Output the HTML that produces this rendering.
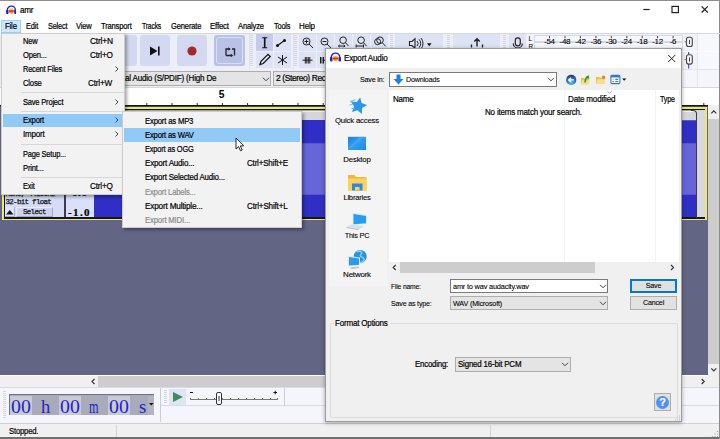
<!DOCTYPE html>
<html>
<head>
<meta charset="utf-8">
<title>amr</title>
<style>
*{box-sizing:border-box;margin:0;padding:0}
html,body{width:720px;height:439px;overflow:hidden;background:#fff}
body{font-family:"Liberation Sans",sans-serif;font-size:9px;color:#000;position:relative}
.a{position:absolute}
.t{position:absolute;white-space:nowrap;line-height:12px;height:12px}
.g{color:#8c8c8c}
#title{left:0;top:0;width:720px;height:20px;background:#fff}
#menubar{left:0;top:20px;width:720px;height:13px;background:#fff}
#tb{left:0;top:33px;width:720px;height:75px;background:#f0f0f0}
#trackarea{left:0;top:108px;width:720px;height:267px;background:#636585}
.menu{background:#f2f2f2;border:1px solid #ccc;box-shadow:2px 2px 3px rgba(0,0,0,.35)}
.hl{background:#91c9f7}
.sep{position:absolute;height:1px;background:#d7d7d7}
.btn{position:absolute;background:#e1e1e1;border:1px solid #adadad;text-align:center}
.combo{position:absolute;background:#e4e4e4;border:1px solid #adadad}

.t{letter-spacing:-0.4px;font-size:8.5px;-webkit-text-stroke:0.2px currentColor}
.mb{line-height:13px;height:13px}
.tbn{background:#d3d9f0;border-radius:3px}
.tbn2{background:#dde2f4}
.grip{width:3px;background:repeating-linear-gradient(180deg,#d0d4e3 0,#d0d4e3 1px,transparent 1px,transparent 2px)}
.sc{top:37.700px;width:20px;text-align:center;-webkit-text-stroke:0.1px currentColor;font-size:8px;line-height:8px;height:8px;letter-spacing:-0.3px}
.mono{font-family:"Liberation Mono",monospace;font-size:7.5px;letter-spacing:-0.7px;color:#111;-webkit-text-stroke:0.25px #111}
.td{top:396.500px;font-family:"Liberation Serif",serif;font-size:18.500px;line-height:21px;height:21px;color:#2222cc;letter-spacing:0.500px;-webkit-text-stroke:0}

.mi{line-height:14px;height:14px;letter-spacing:-0.5px}
.d{font-size:8px;letter-spacing:-0.45px;-webkit-text-stroke:0.1px currentColor}
.d2{font-size:8.5px;letter-spacing:-0.4px}
.c{text-align:center}
</style>
</head>
<body>
<!-- main window -->
<div class="a" id="title"></div>
<div class="a" id="menubar"></div>
<div class="a" id="tb"></div>
<div class="a" id="trackarea"></div>
<!-- title -->
<svg class="a" style="left:5.500px;top:4.500px" width="10.700" height="9.500" viewBox="0 0 11 10">
<path d="M1.300 6.500V5.300A4.200 4.200 0 0 1 9.700 5.300V6.500" fill="none" stroke="#1a1ae6" stroke-width="1.400"/>
<rect x="0" y="5" width="2.500" height="4.600" rx="1.100" fill="#1a1ae6"/><rect x="8.500" y="5" width="2.500" height="4.600" rx="1.100" fill="#1a1ae6"/>
<circle cx="5.500" cy="6.200" r="2.700" fill="#f6c81e"/><path d="M2.900 6.900a2.700 2.700 0 0 0 5.200 0z" fill="#f08a1e"/><path d="M2.800 5.600h5.400v1.500h-5.400z" fill="#e8281a"/>
</svg>
<div class="t" style="left:20.00px;top:4px;letter-spacing:-0.20px;transform:scaleX(0.9476);transform-origin:0 0">amr</div>
<svg class="a" style="left:560px;top:0" width="160" height="20" viewBox="0 0 160 20">
<path d="M83.300 9.500h6.400" stroke="#222" stroke-width="1.200" fill="none"/>
<rect x="112" y="6.400" width="6.400" height="6.200" stroke="#222" stroke-width="1.200" fill="none"/>
<path d="M141.600 6.300l6.200 6.200M147.800 6.300l-6.200 6.200" stroke="#222" stroke-width="1.200" fill="none"/>
</svg>
<!-- menubar -->
<div class="a" style="left:1px;top:20px;width:20px;height:13px;background:#cce8ff;border:1px solid #99d1ff"></div>
<div class="t mb" style="left:5.00px;top:20px;letter-spacing:-0.20px;transform:scaleX(0.9156);transform-origin:0 0">File</div>
<div class="t mb" style="left:25.75px;top:20px;letter-spacing:-0.20px;transform:scaleX(0.8713);transform-origin:0 0">Edit</div>
<div class="t mb" style="left:47.50px;top:20px;letter-spacing:-0.20px;transform:scaleX(0.8614);transform-origin:0 0">Select</div>
<div class="t mb" style="left:76.25px;top:20px;letter-spacing:-0.20px;transform:scaleX(0.8906);transform-origin:0 0">View</div>
<div class="t mb" style="left:101.25px;top:20px;letter-spacing:-0.20px;transform:scaleX(0.8922);transform-origin:0 0">Transport</div>
<div class="t mb" style="left:142.00px;top:20px;letter-spacing:-0.20px;transform:scaleX(0.7955);transform-origin:0 0">Tracks</div>
<div class="t mb" style="left:171.00px;top:20px;letter-spacing:-0.20px;transform:scaleX(0.8959);transform-origin:0 0">Generate</div>
<div class="t mb" style="left:210.00px;top:20px;letter-spacing:-0.20px;transform:scaleX(0.9228);transform-origin:0 0">Effect</div>
<div class="t mb" style="left:238.00px;top:20px;letter-spacing:-0.20px;transform:scaleX(0.8952);transform-origin:0 0">Analyze</div>
<div class="t mb" style="left:273.50px;top:20px;letter-spacing:-0.20px;transform:scaleX(0.8664);transform-origin:0 0">Tools</div>
<div class="t mb" style="left:299.00px;top:20px;letter-spacing:-0.20px;transform:scaleX(0.9474);transform-origin:0 0">Help</div>
<!-- toolbars row -->
<div class="a" style="left:0;top:33px;width:698px;height:36px;background:#eceef8"></div>
<div class="a" style="left:697px;top:33px;width:23px;height:55px;background:#f7f8fd"></div>
<!-- transport buttons -->
<div class="a tbn" style="left:104px;top:35px;width:33px;height:31px"></div>
<div class="a tbn" style="left:140px;top:35px;width:30px;height:31px"></div>
<div class="a tbn" style="left:177px;top:35px;width:30px;height:31px"></div>
<div class="a" style="left:214px;top:35px;width:31px;height:31px;background:#b9c1e6;border-radius:3px"></div>
<div class="a" style="left:216px;top:37px;width:27px;height:27px;border:1px solid #d9def2;border-radius:3px"></div>
<svg class="a" style="left:140px;top:35px" width="110" height="31" viewBox="0 0 110 31">
<path d="M10 11.5l7.5 4.5l-7.5 4.5z" fill="#111"/><rect x="18" y="11.5" width="1.6" height="9" fill="#111"/>
<circle cx="52" cy="16" r="4.6" fill="#a32a2a"/>
<path d="M86 20.500v-6.500h3.500M94.500 20.500v-6.500h-2.500M86 20.500h5.500" fill="none" stroke="#22222c" stroke-width="1.300"/>
<path d="M88.300 12.300l2.400 1.700l-2.400 1.700zM90.800 18.800l2.400 1.700l-2.400 1.700z" fill="#22222c"/>
</svg>
<!-- grippers -->
<div class="a grip" style="left:250px;top:35px;height:32px"></div>
<div class="a grip" style="left:294px;top:35px;height:32px"></div>
<div class="a grip" style="left:390px;top:35px;height:15px"></div>
<div class="a grip" style="left:447px;top:35px;height:15px"></div>
<div class="a grip" style="left:503px;top:35px;height:15px"></div>
<div class="a" style="left:248.500px;top:34px;width:1px;height:35px;background:#dfe2ee"></div><div class="a" style="left:292.500px;top:34px;width:1px;height:35px;background:#dfe2ee"></div>
<!-- tools -->
<div class="a" style="left:256px;top:34px;width:17px;height:17px;background:#c3caeb"></div>
<div class="a tbn2" style="left:274px;top:34px;width:17px;height:17px"></div>
<div class="a tbn2" style="left:256px;top:52px;width:17px;height:16px"></div>
<div class="a tbn2" style="left:274px;top:52px;width:17px;height:16px"></div>
<svg class="a" style="left:256px;top:34px" width="36" height="34" viewBox="0 0 36 34">
<path d="M6.200 3.800h5M6.200 13.800h5" stroke="#111" stroke-width="1.100" fill="none"/><path d="M8.700 3.800v10" stroke="#111" stroke-width="1.600" fill="none"/>
<path d="M21 12l8-6" stroke="#111" stroke-width="1.100" fill="none"/><circle cx="21.500" cy="11.500" r="1.500" fill="#111"/><circle cx="28.500" cy="6.500" r="1.500" fill="#111"/>
<path d="M4 30.500l1-3.200l7-7l2.200 2.200l-7 7z" stroke="#111" stroke-width="1.200" fill="none"/>
<path d="M26.500 21v10M22 23l9 6M31 23l-9 6" stroke="#111" stroke-width="1" fill="none"/>
</svg>
<!-- zoom buttons -->
<div class="a tbn2" style="left:299px;top:34px;width:17px;height:17px"></div>
<div class="a tbn2" style="left:317px;top:34px;width:17px;height:17px"></div>
<div class="a tbn2" style="left:335px;top:34px;width:17px;height:17px"></div>
<div class="a tbn2" style="left:353px;top:34px;width:17px;height:17px"></div>
<div class="a tbn2" style="left:371px;top:34px;width:17px;height:17px"></div>
<div class="a tbn2" style="left:299px;top:52px;width:17px;height:16px"></div>
<div class="a tbn2" style="left:317px;top:52px;width:17px;height:16px"></div>
<svg class="a" style="left:299px;top:34px" width="90" height="34" viewBox="0 0 90 34">
<g fill="none" stroke="#222" stroke-width="1">
<circle cx="7.500" cy="7.500" r="3.500"/><path d="M10 10l4 4M5.500 7.500h4M7.500 5.500v4"/>
<circle cx="25.500" cy="7.500" r="3.500"/><path d="M28 10l4 4M23.500 7.500h4"/>
<circle cx="44.100" cy="6.200" r="3.300"/><path d="M46.500 8.600l3 3.400M39.500 12h6.500M40.800 10.800l-1.300 1.200l1.300 1.200M44.700 10.800l1.300 1.200l-1.300 1.200"/>
<circle cx="62.100" cy="6.200" r="3.300"/><path d="M64.500 8.600l3 3.400M57.200 12h7.300M57.200 10.500v3M64.500 10.500v3"/>
<circle cx="78.600" cy="7.700" r="3"/><circle cx="81" cy="6.200" r="3.300"/><path d="M83.300 8.600l3.200 3.600"/>
<path d="M3.500 26.200h10M6.300 23v6.500M7.800 23v6.500M9.300 23v6.500M10.800 23v6.500"/>
<path d="M21.500 23v6.500M23 23v6.500M24.500 23v6.500M25 26.200h6"/>
</g></svg>
<!-- audio setup / share -->
<div class="a tbn2" style="left:395px;top:34px;width:48px;height:17px"></div>
<div class="a tbn2" style="left:453px;top:34px;width:47px;height:17px"></div>
<div class="a" style="left:509px;top:34px;width:188px;height:17px;background:#f1f3fb"></div>
<div class="a" style="left:509px;top:51px;width:188px;height:18px;background:#f1f3fb"></div>
<div class="a tbn2" style="left:509px;top:34px;width:17px;height:17px"></div>
<div class="a" style="left:534px;top:35px;width:149px;height:7px;background:#f6f7fd;border:1px solid #d4d7e6"></div>
<div class="a" style="left:534px;top:42px;width:149px;height:8px;background:#f6f7fd;border:1px solid #d4d7e6"></div>
<svg class="a" style="left:395px;top:34px" width="140" height="18" viewBox="0 0 140 18">
<g fill="none" stroke="#222" stroke-width="1.100">
<path d="M14.500 7.500h2.500l3-2.700v9.400l-3-2.700h-2.500z"/><path d="M22 7a3.500 3.500 0 0 1 0 5M24 5.300a6 6 0 0 1 0 8.400M26 4a8.500 8.500 0 0 1 0 11" stroke-width="1"/>
<path d="M82 12.500v-7.500M79.300 7.500l2.700-2.800l2.700 2.800M76.500 10.500v3M87.500 10.500v3" stroke-width="1.400"/>
<rect x="120.300" y="3.800" width="5" height="8" rx="2.500" stroke-width="1.200"/><path d="M118.300 9.500a4.500 4.500 0 0 0 9 0M122.800 14v2M120.300 16h5" stroke-width="1.200"/>
</g>
<path d="M32 9.300h4.600l-2.300 2.900z" fill="#111"/>
</svg>
<div class="t" style="left:528.500px;top:34.500px;font-size:6.500px;line-height:7px;height:7px;-webkit-text-stroke:0">L</div>
<div class="t" style="left:528.500px;top:43px;font-size:6.500px;line-height:7px;height:7px;-webkit-text-stroke:0">R</div>
<div class="t sc" style="left:539.4px">-54</div><div class="t sc" style="left:554.9px">-48</div><div class="t sc" style="left:570.3px">-42</div><div class="t sc" style="left:585.8px">-36</div><div class="t sc" style="left:601.2px">-30</div><div class="t sc" style="left:616.6px">-24</div><div class="t sc" style="left:632.1px">-18</div><div class="t sc" style="left:647.5px">-12</div><div class="t sc" style="left:663.0px">-6</div>
<svg class="a" style="left:541px;top:35.500px" width="140" height="4" viewBox="0 0 140 4"><path d="M8.5 0v2.300M24.0 0v2.300M39.4 0v2.300M54.9 0v2.300M70.3 0v2.300M85.8 0v2.300M101.2 0v2.300M116.6 0v2.300M132.1 0v2.300" stroke="#444" stroke-width="1"/></svg>
<svg class="a" style="left:682px;top:34px" width="16" height="36" viewBox="0 0 16 36">
<path d="M6.700 17v17.500" stroke="#2a2ae0" stroke-width="1"/>
<rect x="4.500" y="3.200" width="5.800" height="9.300" rx="2" fill="#f4f4f8" stroke="#444" stroke-width="1.100"/><path d="M7.500 5.800v4.200" stroke="#444"/>
<rect x="4.500" y="20.800" width="5.800" height="9.300" rx="2" fill="#f4f4f8" stroke="#444" stroke-width="1.100"/><path d="M7.500 23.400v4.200" stroke="#444"/>
<path d="M2.500 7.800h2M2.500 25.500h2" stroke="#b07040"/>
</svg>
<!-- device toolbar -->
<div class="a" style="left:0;top:69px;width:720px;height:19px;background:#f5f6fc"></div><div class="a" style="left:0;top:69px;width:600px;height:19px;background:#eceef8"></div><div class="a" style="left:600px;top:68.500px;width:120px;height:1px;background:#e2e4ee"></div><div class="a" style="left:697px;top:33px;width:1px;height:55px;background:#e2e4ee"></div><div class="a" style="left:509px;top:50.500px;width:211px;height:1px;background:#fbfbfe"></div>
<div class="combo" style="left:60px;top:71px;width:211px;height:15px"></div>
<div class="t" style="left:125.00px;top:72px;letter-spacing:-0.20px;transform:scaleX(0.9475);transform-origin:0 0">al Audio (S/PDIF) (High De</div>
<svg class="a" style="left:262.300px;top:76.500px" width="8" height="5" viewBox="0 0 8 5"><path d="M1 .800l3 3l3-3" fill="none" stroke="#444" stroke-width="1"/></svg>
<div class="combo" style="left:273px;top:71px;width:120px;height:15px"></div>
<div class="t" style="left:276px;top:72px">2 (Stereo) Recording Chann</div>
<!-- ruler -->
<div class="a" style="left:0;top:88px;width:720px;height:17px;background:#fff"></div>
<div class="a" style="left:0;top:87px;width:720px;height:1px;background:#d5d7e2"></div>
<div class="t" style="left:211.700px;width:20px;text-align:center;top:89.300px;font-weight:bold;font-size:10.300px;letter-spacing:0;-webkit-text-stroke:0">5</div>
<svg class="a" style="left:0;top:102.500px" width="720" height="3" viewBox="0 0 720 3"><path d="M96.4 0v2.500M121.6 0v2.500M146.8 0v2.500M172.0 0v2.500M197.2 0v2.500M222.4 0v2.500M247.6 0v2.500M272.8 0v2.500M298.0 0v2.500M323.2 0v2.500M703.800 0v2.500" stroke="#333" stroke-width="1" fill="none"/></svg>
<!-- track -->
<div class="a" style="left:0;top:105px;width:708px;height:5px;background:#636585"></div>
<div class="a" style="left:2px;top:105px;width:705px;height:115px;background:#eee96c"></div>
<div class="a" style="left:0;top:105px;width:708px;height:1px;background:#14141c"></div>
<div class="a" style="left:0;top:106px;width:708px;height:1px;background:#4a4a38"></div>
<div class="a" style="left:4px;top:109px;width:701px;height:109.500px;background:#16161e"></div>
<div class="a" style="left:5px;top:110px;width:691px;height:107px;background:#2f2fc6"></div>
<div class="a" style="left:95px;top:110px;width:601px;height:2px;background:#eeeef2"></div>
<div class="a" style="left:95px;top:112px;width:601px;height:8px;background:#d6d6da"></div>
<svg class="a" style="left:95px;top:119px" width="601" height="99" viewBox="0 0 601 100" preserveAspectRatio="none">
<rect x="0" y="1" width="601" height="98" fill="#2f2fc6"/>
<path id="wtop" d="M0 1.500L4 .8L9 1.600L15 1L22 1.700L30 .900L37 1.500L45 1.100L52 1.800L60 1L68 1.600L77 .900L85 1.500L94 1.100L103 1.700L112 1L120 1.500L130 .900L139 1.600L148 1.100L158 1.700L167 1L177 1.500L186 .900L195 1.600L205 1.100L601 1.300V0H0z" fill="#d6d6da"/>
<path d="M0 24.500L6 24L13 24.800L21 24.100L29 24.700L38 24L47 24.600L56 24.200L66 24.800L75 24.100L85 24.600L95 24L105 24.700L115 24.200L125 24.600L135 24L145 24.700L155 24.100L165 24.600L175 24.200L185 24.700L195 24L205 24.500L601 24.400V76.500L205 76.600L195 77L185 76.400L175 76.900L165 76.300L155 77L145 76.400L135 76.900L125 76.300L115 76.800L105 76.400L95 77L85 76.300L75 76.900L66 76.400L56 77L47 76.300L38 76.900L29 76.400L21 77L13 76.300L6 76.800L0 76.500z" fill="#6666d8"/>
</svg>
<div class="a" style="left:5px;top:110px;width:59px;height:107px;background:#d6dcf4"></div>
<div class="a" style="left:64px;top:110px;width:2px;height:107px;background:#3c3c50"></div>
<div class="a" style="left:66px;top:110px;width:28px;height:107px;background:#d9e0f8"></div>
<div class="t mono" style="left:5.500px;top:196px">32-bit float</div>
<div class="t mono" style="left:5.500px;top:188px">Mono, 44100Hz</div>
<div class="a" style="left:5px;top:207px;width:10px;height:10px;background:#dfe5f8;border-right:1px solid #aab0cc;border-bottom:1px solid #aab0cc"></div>
<div class="a" style="left:16px;top:207px;width:37px;height:10px;background:#cbd3ef;border-left:1px solid #e6eafa;border-top:1px solid #e6eafa;border-right:1px solid #a2a8c6;border-bottom:1px solid #a2a8c6"></div>
<svg class="a" style="left:6px;top:209px" width="8" height="6" viewBox="0 0 8 6"><path d="M0 5.500h7.500l-3.750-4.500z" fill="#111"/></svg>
<div class="t mono" style="left:23px;top:206px">Select</div>
<div class="t" style="left:68px;top:206px;font-family:'Liberation Serif',serif;font-weight:bold;font-size:11px;letter-spacing:1.400px">-1.0</div>
<div class="t" style="left:72px;top:186px;font-family:'Liberation Serif',serif;font-weight:bold;font-size:11px;letter-spacing:0.600px">0.0</div>
<!-- clip end handle -->
<div class="a" style="left:696px;top:110px;width:9px;height:107px;background:#d8d8dc"></div><div class="a" style="left:690px;top:110px;width:7px;height:108px;border-top:1px solid #3a3a48;border-right:1px solid #3a3a48;border-radius:0 4px 0 0"></div><div class="a" style="left:95px;top:110px;width:596px;height:1px;background:#a0a0aa"></div>
<!-- v scrollbar -->
<div class="a" style="left:708px;top:105px;width:11px;height:271px;background:#f0f0f0"></div>
<div class="a" style="left:708px;top:118.500px;width:11px;height:245.500px;background:#cdcdcd"></div>
<svg class="a" style="left:708px;top:105px" width="11" height="271" viewBox="0 0 11 271"><path d="M3.300 8.400l2.500-2.500l2.500 2.500M3.300 263.300l2.500 2.500l2.500-2.500" fill="none" stroke="#333" stroke-width="1.200"/></svg>
<!-- h scrollbar -->
<div class="a" style="left:0;top:376px;width:720px;height:12px;background:#f0f0f0"></div>
<div class="a" style="left:98px;top:376px;width:580px;height:11px;background:#cdcdcd"></div>
<svg class="a" style="left:88px;top:376px" width="624" height="12" viewBox="0 0 624 12"><path d="M6.500 3l-2.500 2.500l2.500 2.500M613.700 3l2.500 2.500l-2.500 2.500" fill="none" stroke="#333" stroke-width="1.200"/></svg>
<!-- bottom toolbars -->
<div class="a" style="left:0;top:388px;width:720px;height:35px;background:#f4f6fc"></div>
<div class="a" style="left:0;top:387px;width:720px;height:1px;background:#d8dae6"></div>
<div class="a" style="left:161px;top:405px;width:559px;height:1px;background:#d8dae6"></div>
<div class="a" style="left:160px;top:388px;width:1px;height:34px;background:#c9ccda"></div>
<div class="a" style="left:284px;top:388px;width:1px;height:18px;background:#c9ccda"></div>
<div class="a grip" style="left:3px;top:391px;height:28px"></div>
<div class="a grip" style="left:164px;top:390px;height:14px"></div>
<!-- time display -->
<div class="a" style="left:8.500px;top:394.300px;width:145.300px;height:21px;background:#a9abba;border-top:1px solid #70727f;border-left:1px solid #70727f"></div>
<div class="a" style="left:10px;top:395.500px;width:22px;height:19.500px;background:#c8cad6"></div>
<div class="a" style="left:58.500px;top:395.500px;width:22px;height:19.500px;background:#c8cad6"></div>
<div class="a" style="left:107.500px;top:395.500px;width:22px;height:19.500px;background:#c8cad6"></div>
<div class="t td" style="left:11.300px;letter-spacing:0;transform:scaleX(1.07);transform-origin:0 0">00</div><div class="t td" style="left:41px">h</div><div class="t td" style="left:60px;letter-spacing:0;transform:scaleX(1.07);transform-origin:0 0">00</div><div class="t td" style="left:89.300px;transform:scaleX(.66);transform-origin:0 0">m</div><div class="t td" style="left:108.700px;letter-spacing:0;transform:scaleX(1.07);transform-origin:0 0">00</div><div class="t td" style="left:139px">s</div>
<div class="a" style="left:148px;top:395.500px;width:5.800px;height:19.500px;background:#b3b5c3"></div><svg class="a" style="left:148.500px;top:403.300px" width="5" height="3" viewBox="0 0 5 3"><path d="M0 0h4.600l-2.300 2.600z" fill="#111"/></svg>
<!-- play at speed -->
<div class="a" style="left:169px;top:389px;width:17px;height:16px;background:#dfe4f5"></div>
<svg class="a" style="left:169px;top:389px" width="116" height="17" viewBox="0 0 116 17">
<path d="M4 3l10 5l-10 5z" fill="#3b8c5c"/>
<path d="M21 10.500h88" stroke="#777" stroke-width="1"/>
<path d="M21.500 9v2M29.500 9v2M37.500 9v2M45.500 9v2M53.500 9v2M61.500 9v2M69.500 9v2M77.500 9v2M85.500 9v2M93.500 9v2M101.500 9v2M108.500 9v2" stroke="#777" stroke-width="1"/>
<rect x="47.500" y="3.500" width="5" height="12" rx="1.500" fill="#fff" stroke="#333"/><path d="M50 7v5" stroke="#333"/>
<path d="M21 3.500h3M104.500 3.500h3.500M106.250 1.800v3.500" stroke="#111" stroke-width="1"/>
</svg>
<!-- status bar -->
<div class="a" style="left:0;top:423px;width:720px;height:16px;background:#f0f0f0;border-top:1px solid #d0d0d0"></div>
<div class="a" style="left:116px;top:425px;width:1px;height:13px;background:#d4d4d4"></div>
<div class="a" style="left:490px;top:425px;width:1px;height:13px;background:#d4d4d4"></div>
<div class="t" style="left:9.00px;top:425px;letter-spacing:-0.20px;transform:scaleX(0.9039);transform-origin:0 0">Stopped.</div>
<svg class="a" style="left:711px;top:430px" width="8" height="8" viewBox="0 0 8 8"><path d="M6.500 1v1M6.500 3.500v1M6.500 6v1M4 3.500v1M4 6v1M1.500 6v1" stroke="#a8a8a8" stroke-width="1.200"/></svg>
<div class="a" style="left:0;top:437.300px;width:720px;height:1.700px;background:#707070"></div>
<div class="a" style="left:719px;top:0;width:1px;height:439px;background:#8a8a8a"></div>
<div class="a" style="left:0;top:0;width:720px;height:1px;background:#8e8e8e"></div><div class="a" style="left:22px;top:32.500px;width:698px;height:1px;background:#d6d8e0"></div>
<!--MAINEND-->
<!-- file menu -->
<div class="a menu" style="left:1px;top:33px;width:124px;height:162px"></div>
<div class="a hl" style="left:3px;top:113.500px;width:120px;height:13.500px"></div>
<div class="sep" style="left:21px;top:92px;width:103px"></div>
<div class="sep" style="left:21px;top:111px;width:103px"></div>
<div class="sep" style="left:21px;top:144px;width:103px"></div>
<div class="sep" style="left:21px;top:177px;width:103px"></div>
<div class="t mi" style="left:23.25px;top:34px;letter-spacing:-0.20px;transform:scaleX(0.8882);transform-origin:0 0">New</div><div class="t mi" style="left:89.50px;top:34px;letter-spacing:-0.20px;transform:scaleX(0.9861);transform-origin:0 0">Ctrl+N</div>
<div class="t mi" style="left:23.25px;top:48px;letter-spacing:-0.20px;transform:scaleX(0.8900);transform-origin:0 0">Open...</div><div class="t mi" style="left:89.50px;top:48px;letter-spacing:-0.20px;transform:scaleX(0.9660);transform-origin:0 0">Ctrl+O</div>
<div class="t mi" style="left:23.25px;top:62px;letter-spacing:-0.20px;transform:scaleX(0.8714);transform-origin:0 0">Recent Files</div>
<div class="t mi" style="left:23.25px;top:76px;letter-spacing:-0.20px;transform:scaleX(0.8957);transform-origin:0 0">Close</div><div class="t mi" style="left:88.25px;top:76px;letter-spacing:-0.20px;transform:scaleX(0.9617);transform-origin:0 0">Ctrl+W</div>
<div class="t mi" style="left:23.25px;top:95px;letter-spacing:-0.20px;transform:scaleX(0.8805);transform-origin:0 0">Save Project</div>
<div class="t mi" style="left:23.25px;top:113px;letter-spacing:-0.20px;transform:scaleX(0.9014);transform-origin:0 0">Export</div>
<div class="t mi" style="left:23.25px;top:127px;letter-spacing:-0.20px;transform:scaleX(0.9419);transform-origin:0 0">Import</div>
<div class="t mi" style="left:23.25px;top:146.50px;letter-spacing:-0.20px;transform:scaleX(0.8754);transform-origin:0 0">Page Setup...</div>
<div class="t mi" style="left:23.25px;top:160.50px;letter-spacing:-0.20px;transform:scaleX(0.8956);transform-origin:0 0">Print...</div>
<div class="t mi" style="left:23.25px;top:179px;letter-spacing:-0.20px;transform:scaleX(0.8656);transform-origin:0 0">Exit</div><div class="t mi" style="left:90.00px;top:179px;letter-spacing:-0.20px;transform:scaleX(0.9660);transform-origin:0 0">Ctrl+Q</div>
<svg class="a" style="left:113px;top:33px" width="8" height="120" viewBox="0 0 8 120"><g fill="none" stroke="#444" stroke-width="1"><path d="M2.500 33.500l2.500 2.500l-2.500 2.500M2.500 66.500l2.500 2.500l-2.500 2.500M2.500 84.500l2.500 2.500l-2.500 2.500M2.500 98.500l2.500 2.500l-2.500 2.500"/></g></svg>
<!-- export submenu -->
<div class="a menu" style="left:122px;top:111.300px;width:180px;height:117px"></div>
<div class="a hl" style="left:124px;top:128px;width:176px;height:14px"></div>
<div class="t mi" style="left:144.91px;top:114.0px;letter-spacing:-0.20px;transform:scaleX(0.9071);transform-origin:0 0">Export as MP3</div>
<div class="t mi" style="left:144.91px;top:128.1px;letter-spacing:-0.20px;transform:scaleX(0.9007);transform-origin:0 0">Export as WAV</div>
<div class="t mi" style="left:144.91px;top:142.2px;letter-spacing:-0.20px;transform:scaleX(0.8777);transform-origin:0 0">Export as OGG</div>
<div class="t mi" style="left:144.91px;top:156.3px;letter-spacing:-0.20px;transform:scaleX(0.9429);transform-origin:0 0">Export Audio...</div><div class="t mi" style="left:247.11px;top:156.3px;letter-spacing:-0.20px;transform:scaleX(0.9419);transform-origin:0 0">Ctrl+Shift+E</div>
<div class="t mi" style="left:144.91px;top:170.4px;letter-spacing:-0.20px;transform:scaleX(0.9287);transform-origin:0 0">Export Selected Audio...</div>
<div class="t mi g" style="left:144.91px;top:184.5px;letter-spacing:-0.20px;transform:scaleX(0.9041);transform-origin:0 0">Export Labels...</div>
<div class="t mi" style="left:144.91px;top:198.6px;letter-spacing:-0.20px;transform:scaleX(0.9649);transform-origin:0 0">Export Multiple...</div><div class="t mi" style="left:247.11px;top:198.6px;letter-spacing:-0.20px;transform:scaleX(0.9535);transform-origin:0 0">Ctrl+Shift+L</div>
<div class="t mi g" style="left:144.91px;top:212.7px;letter-spacing:-0.20px;transform:scaleX(0.9138);transform-origin:0 0">Export MIDI...</div>
<!-- cursor -->
<svg class="a" style="left:235px;top:137px" width="10" height="15" viewBox="0 0 10 15"><path d="M1 1v11l2.600-2.400l1.900 4.200l1.700-.8l-1.900-4.100h3.500z" fill="#fff" stroke="#111" stroke-width="0.900"/></svg>
<!--MENUSEND-->
<!-- export dialog -->
<div class="a" style="left:325px;top:47.500px;width:357px;height:374.500px;background:#f0f0f0;border:1px solid #9c9c9c;box-shadow:0 1px 4px rgba(0,0,0,.35)"></div>
<div class="a" style="left:326px;top:48.500px;width:355px;height:19.500px;background:#fff"></div>
<svg class="a" style="left:330.400px;top:52px" width="11" height="10" viewBox="0 0 11 10">
<path d="M1.300 6.500V5.300A4.200 4.200 0 0 1 9.700 5.300V6.500" fill="none" stroke="#1a1ae6" stroke-width="1.400"/>
<rect x="0" y="5" width="2.500" height="4.600" rx="1.100" fill="#1a1ae6"/><rect x="8.500" y="5" width="2.500" height="4.600" rx="1.100" fill="#1a1ae6"/>
<circle cx="5.500" cy="6.200" r="2.700" fill="#f6c81e"/><path d="M2.900 6.900a2.700 2.700 0 0 0 5.200 0z" fill="#f08a1e"/><path d="M2.800 5.600h5.400v1.500h-5.400z" fill="#e8281a"/>
</svg>
<div class="t" style="left:344.25px;top:52px;letter-spacing:-0.20px;transform:scaleX(0.9508);transform-origin:0 0">Export Audio</div>
<svg class="a" style="left:667px;top:53.500px" width="10" height="10" viewBox="0 0 10 10"><path d="M1.200 1l7 7M8.200 1l-7 7" stroke="#222" stroke-width="1" fill="none"/></svg>
<div class="t d" style="left:360.00px;top:74px;letter-spacing:-0.20px;transform:scaleX(0.8905);transform-origin:0 0">Save in:</div>
<div class="a" style="left:389px;top:72px;width:168px;height:15px;background:#fff;border:1px solid #7a7a7a"></div>
<svg class="a" style="left:393px;top:74px" width="11" height="11" viewBox="0 0 11 11"><path d="M3.500 0.500h4v4.500h3l-5 5.500l-5-5.500h3z" fill="#1f7fe0"/></svg>
<div class="t d" style="left:405.75px;top:74px;letter-spacing:-0.20px;transform:scaleX(0.8886);transform-origin:0 0">Downloads</div>
<svg class="a" style="left:546.500px;top:77.200px" width="8" height="5" viewBox="0 0 8 5"><path d="M1 .800l3 3l3-3" fill="none" stroke="#444" stroke-width="1"/></svg>
<!-- dialog toolbar icons -->
<svg class="a" style="left:560px;top:70px" width="70" height="18" viewBox="0 0 70 18">
<defs><radialGradient id="bg1" cx=".5" cy=".75" r=".7"><stop offset="0" stop-color="#58c4f4"/><stop offset=".55" stop-color="#2a74c8"/><stop offset="1" stop-color="#173f86"/></radialGradient></defs>
<circle cx="11.200" cy="9.900" r="5.100" fill="url(#bg1)"/>
<path d="M14 9.900h-4.800M11 7.700l-2.300 2.200l2.300 2.200" stroke="#fff" stroke-width="1.400" fill="none"/>
<path d="M21 8h3l.8.800h4.200v5.500h-8z" fill="#e8c040"/><path d="M21 14.300l1.300-4.500h7.700l-1.300 4.500z" fill="#f8e08a"/>
<path d="M25 12.500c.3-3 1-4.500 2.300-5.500" stroke="#2a9a34" stroke-width="1.600" fill="none"/><path d="M25.300 7.600l3.200-2.700l.9 4z" fill="#2a9a34"/>
<path d="M36 7h3l.8.800h4.700v6h-8.500z" fill="#e8c040"/><path d="M36 13.800l1.200-4.600h8.200l-1.200 4.600z" fill="#f8e08a"/>
<circle cx="43.600" cy="7.300" r="1.700" fill="#f07a28"/>
<rect x="50.900" y="5.400" width="9" height="8.200" rx="1" fill="#fff" stroke="#2a7ade" stroke-width="1.100"/><path d="M50.900 5.400h9v2h-9z" fill="#2a7ade"/>
<path d="M52.500 9.300h1.300" stroke="#e8c040" stroke-width="1.200"/><path d="M55.300 9.300h3" stroke="#2a7ade" stroke-width="1.200"/><path d="M52.500 11.600h1.300" stroke="#e04030" stroke-width="1.200"/><path d="M55.300 11.600h3" stroke="#30a040" stroke-width="1.200"/>
<path d="M62.100 8.400h4.200l-2.100 2.400z" fill="#111"/>
</svg>
<!-- places bar -->
<div class="a" style="left:329px;top:90px;width:58px;height:196px;background:#f4f4f4"></div>
<svg class="a" style="left:335px;top:92px" width="46" height="190" viewBox="0 0 46 190">
<defs><linearGradient id="dg" x1="0" y1="0" x2="1" y2="1"><stop offset="0" stop-color="#1a84e2"/><stop offset=".5" stop-color="#2f9df0"/><stop offset="1" stop-color="#1b8ae6"/></linearGradient></defs>
<path d="M25.2 5.4L26.6 11.1L32.2 13.1L27.1 16.1L27.0 22.0L22.5 18.2L16.9 19.9L19.1 14.4L15.8 9.6L21.7 10.1z" fill="#2a98ea"/>
<path d="M15 9.500l5.500-1.800M14.500 13l4-1M16.500 16.800l3-.6" stroke="#6cc0f6" stroke-width="1.100" fill="none"/>
<rect x="13" y="44.800" width="18" height="13.200" fill="url(#dg)"/><path d="M13 56l12-11.200h4L13 58z" fill="#4cb0f6" opacity=".6"/>
<path d="M13 83h6.500l1.500 2h10.500v13.500h-18.500z" fill="#f0b92e"/><path d="M13 86.500h18.500v12h-18.500z" fill="#fad25e"/>
<path d="M17 91.500h10.500v7h-10.500z" fill="#2e86e0"/><path d="M20 95h4.500v3.500h-4.500z" fill="#fad25e"/>
<path d="M17.500 120.800l14.500 2.200v9l-14.500 1.200z" fill="#dfe7ee"/><path d="M18.500 122l12.500 1.900v7.300l-12.500 1z" fill="#2a9cf0"/>
<path d="M11.500 135l5-2.800l11.500 1.500l-5 3.300z" fill="#d8e0e8"/><path d="M11.500 135v.9l11.500 2v-.9z" fill="#b4bec8"/><path d="M23 137l5-3.300v.9l-5 3.300z" fill="#c4ccd4"/>
<circle cx="25.200" cy="164.400" r="6.500" fill="#2b8fe2"/><path d="M21.500 160c2-1.500 4.500-1 5 .5s-1.500 2-1 3.500s3 1 3.500 3s-2 3.500-4 3.500" fill="none" stroke="#7fd0f8" stroke-width="1.600"/>
<path d="M13 163.800l12 1.800v8l-12 1z" fill="#dfe7ee"/><path d="M14 165l10 1.500v6.300l-10 .8z" fill="#2a9cf0"/>
<path d="M15 175.500l8-1l1.500 1.500l-8 1.200z" fill="#bcc6d0"/>
</svg>
<div class="t d c" style="left:327.04px;top:115px;width:60px;letter-spacing:-0.20px;transform:scaleX(0.9753);transform-origin:50% 0">Quick access</div>
<div class="t d c" style="left:327.16px;top:154px;width:60px;letter-spacing:-0.20px;transform:scaleX(0.9768);transform-origin:50% 0">Desktop</div>
<div class="t d c" style="left:326.61px;top:192px;width:60px;letter-spacing:-0.20px;transform:scaleX(0.9419);transform-origin:50% 0">Libraries</div>
<div class="t d c" style="left:327.32px;top:230px;width:60px;letter-spacing:-0.20px;transform:scaleX(0.9097);transform-origin:50% 0">This PC</div>
<div class="t d c" style="left:326.92px;top:268.500px;width:60px;letter-spacing:-0.20px;transform:scaleX(0.9946);transform-origin:50% 0">Network</div>
<!-- file list -->
<div class="a" style="left:389px;top:90.300px;width:290px;height:171.700px;background:#fff"></div>
<div class="a" style="left:564px;top:89px;width:1px;height:173px;background:#eef2fb"></div>
<div class="a" style="left:655px;top:89px;width:1px;height:173px;background:#eef2fb"></div>
<div class="t d2" style="left:393.00px;top:92.500px;letter-spacing:-0.20px;transform:scaleX(0.9400);transform-origin:0 0">Name</div>
<div class="t d2" style="left:567.50px;top:92.500px;letter-spacing:-0.20px;transform:scaleX(0.9489);transform-origin:0 0">Date modified</div>
<div class="t d2" style="left:660.00px;top:92.500px;letter-spacing:-0.20px;transform:scaleX(0.8408);transform-origin:0 0">Type</div>
<svg class="a" style="left:607.200px;top:91.300px" width="6" height="3" viewBox="0 0 6 3"><path d="M0.500 0.300l2.200 2l2.200-2" fill="none" stroke="#a8a8a8" stroke-width=".9"/></svg>
<div class="t d2" style="left:485.00px;top:106px;letter-spacing:-0.20px;transform:scaleX(0.9419);transform-origin:0 0">No items match your search.</div>
<div class="a" style="left:389px;top:262px;width:290px;height:11px;background:#f0f0f0"></div>
<div class="a" style="left:400px;top:262px;width:195px;height:11px;background:#cdcdcd"></div>
<svg class="a" style="left:389px;top:262px" width="290" height="11" viewBox="0 0 290 11"><path d="M6.700 3l-2.500 2.500l2.500 2.500M282 3l2.500 2.500l-2.500 2.500" fill="none" stroke="#333" stroke-width="1.200"/></svg>
<!-- file name -->
<div class="t d" style="left:390.50px;top:280.60px;letter-spacing:-0.20px;transform:scaleX(0.8437);transform-origin:0 0">File name:</div>
<div class="a" style="left:450px;top:279px;width:158px;height:14px;background:#fff;border:1px solid #7a7a7a"></div>
<div class="t d" style="left:453.25px;top:280.60px;letter-spacing:-0.20px;transform:scaleX(0.9200);transform-origin:0 0">amr to wav audacity.wav</div>
<svg class="a" style="left:599px;top:283.700px" width="8" height="5" viewBox="0 0 8 5"><path d="M1 .800l3 3l3-3" fill="none" stroke="#444" stroke-width="1"/></svg>
<div class="t d" style="left:390.50px;top:297.50px;letter-spacing:-0.20px;transform:scaleX(0.8844);transform-origin:0 0">Save as type:</div>
<div class="combo" style="left:450px;top:296px;width:158px;height:14px"></div>
<div class="t d" style="left:453.25px;top:297.50px;letter-spacing:-0.20px;transform:scaleX(0.9029);transform-origin:0 0">WAV (Microsoft)</div>
<svg class="a" style="left:599px;top:300.700px" width="8" height="5" viewBox="0 0 8 5"><path d="M1 .800l3 3l3-3" fill="none" stroke="#444" stroke-width="1"/></svg>
<div class="btn" style="left:630px;top:279px;width:47px;height:14px;border:1px solid #0078d7;box-shadow:inset 0 0 0 1px #0078d7"></div>
<div class="t d c" style="left:629.79px;top:280px;width:47px;letter-spacing:-0.20px;transform:scaleX(0.8930);transform-origin:50% 0">Save</div>
<div class="btn" style="left:630px;top:296px;width:47px;height:14px"></div>
<div class="t d c" style="left:629.55px;top:297px;width:47px;letter-spacing:-0.20px;transform:scaleX(0.8890);transform-origin:50% 0">Cancel</div>
<!-- format options -->
<div class="a" style="left:329.500px;top:323.300px;width:348px;height:95px;border:1px solid #dcdcdc;border-radius:2px"></div>
<div class="t" style="left:333.96px;top:317px;background:#f0f0f0;padding:0 2px 0 1px;letter-spacing:-0.20px;transform:scaleX(0.9450);transform-origin:0 0">Format Options</div>
<div class="t" style="left:414.91px;top:358px;letter-spacing:-0.20px;transform:scaleX(0.9195);transform-origin:0 0">Encoding:</div>
<div class="combo" style="left:454.500px;top:357px;width:116px;height:14.500px"></div>
<div class="t" style="left:458.21px;top:358px;letter-spacing:-0.20px;transform:scaleX(0.9317);transform-origin:0 0">Signed 16-bit PCM</div>
<svg class="a" style="left:560.500px;top:362.200px" width="8" height="5" viewBox="0 0 8 5"><path d="M1 .800l3 3l3-3" fill="none" stroke="#444" stroke-width="1"/></svg>
<div class="a" style="left:653.700px;top:393.400px;width:17.500px;height:17.700px;background:#e1e1e1;border:1px solid #adadad"></div>
<div class="a" style="left:655.800px;top:395.500px;width:13.400px;height:13.400px;border-radius:7px;background:#4d90fe"></div>
<div class="t" style="left:656px;top:396px;width:13px;text-align:center;color:#fff;font-weight:bold;font-size:11px;line-height:13px;height:13px;letter-spacing:0">?</div>
<svg class="a" style="left:674px;top:414px" width="7" height="7" viewBox="0 0 7 7"><path d="M5.500 1.500v1M5.500 3.500v1M5.500 5.500v1M3.500 3.500v1M3.500 5.500v1M1.500 5.500v1" stroke="#b4b4b4" stroke-width="1"/></svg>
<!--DIALOGEND-->
</body>
</html>
